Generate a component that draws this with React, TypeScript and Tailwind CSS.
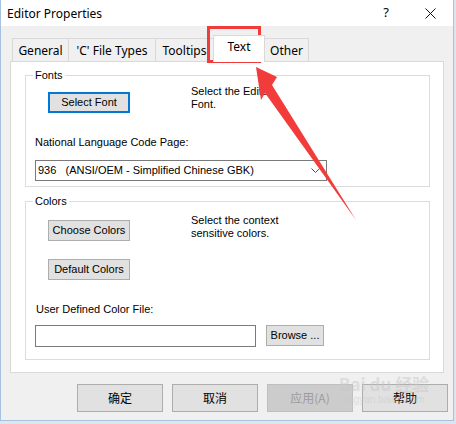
import React from "react";

const body = "font-['Liberation_Sans',Arial,sans-serif] text-[11px] leading-[13px] text-black";
const ui = "font-['Noto_Sans','Liberation_Sans',sans-serif]";
const cjk = "font-['Noto_Sans_CJK_SC','Noto_Sans',sans-serif]";

function Group({
  label,
  className,
  children,
}: {
  label: string;
  className?: string;
  children: React.ReactNode;
}) {
  return (
    <div className={`relative border border-[#dcdcdc] ${className ?? ""}`}>
      {/* legend over the border line */}
      <span className={`absolute -top-[7px] left-[7px] bg-white px-[2px] ${body}`}>{label}</span>
      {children}
    </div>
  );
}

function Tab({ label, w, active }: { label: string; w: string; active?: boolean }) {
  if (active) {
    return (
      <div
        className={`relative z-10 -ml-px flex h-[27px] items-start justify-center border border-b-0 border-[#d9d9d9] bg-white pt-[2px] text-[12px] ${ui} ${w}`}
      >
        {label}
      </div>
    );
  }
  return (
    <div
      className={`-ml-px flex h-[24px] items-start justify-center border border-[#d9d9d9] bg-[#f0f0f0] pt-[3px] text-[12px] first:ml-0 ${ui} ${w}`}
    >
      {label}
    </div>
  );
}

function DialogButton({ label, disabled }: { label: string; disabled?: boolean }) {
  return (
    <button
      className={`h-[28px] w-[86px] border text-[12px] ${cjk} ${
        disabled
          ? "border-[#bfbfbf] bg-[#cccccc] text-[#9c9c9c]"
          : "border-[#adadad] bg-[#e1e1e1] text-black"
      }`}
    >
      {label}
    </button>
  );
}

export default function App() {
  const smallBtn = `h-[21px] w-[82px] border border-[#adadad] bg-[#e1e1e1] ${body}`;

  return (
    <div className="relative h-[424px] w-[456px] overflow-hidden bg-[#dfe5ec]">
      {/* 窓本体 */}
      <div className="flex h-[421px] w-[454px] flex-col border-x border-b border-[#a7c2de] bg-[#f0f0f0]">
        {/* タイトルバー */}
        <div className={`flex h-[26px] shrink-0 items-center bg-white pl-[6px] text-[12px] text-black ${ui}`}>
          <span className="flex-1 pt-[1px]">Editor Properties</span>
          <span className="mr-[36px] text-[13px]">?</span>
          <svg width="11" height="11" viewBox="0 0 11 11" className="mr-[17px]">
            <path d="M0.5 0.5 L10.5 10.5 M10.5 0.5 L0.5 10.5" stroke="#111" strokeWidth="1" />
          </svg>
        </div>

        <div className="flex flex-1 flex-col pt-[9px]">
          {/* タブ */}
          <div className="-mb-px flex items-end pl-[11px]">
            <Tab label="General" w="w-[57px]" />
            <Tab label="'C' File Types" w="w-[88px]" />
            <Tab label="Tooltips" w="w-[59px]" />
            <Tab label="Text" w="w-[52px]" active />
            <Tab label="Other" w="w-[45px]" />
          </div>

          {/* タブパネル */}
          <div className="ml-[9px] flex h-[312px] w-[434px] flex-col border border-[#d9d9d9] bg-white px-[14px] pt-[13px]">
            <Group label="Fonts" className="h-[112px] w-[405px]">
              <div className="flex items-start pl-[22px] pt-[9px]">
                <button className={`h-[21px] w-[82px] mt-[7px] border-2 border-[#0078d7] bg-[#e1e1e1] ${body}`}>
                  Select Font
                </button>
                <p className={`ml-[61px] w-[96px] ${body}`}>Select the Editor Font.</p>
              </div>
              <div className={`ml-[9px] mt-[23px] ${body}`}>National Language Code Page:</div>
              <div className={`ml-[9px] mt-[11px] flex h-[21px] w-[292px] items-center border border-[#7a7a7a] bg-white pl-[2px] pr-[6px] ${body}`}>
                <span className="flex-1 whitespace-pre">936   (ANSI/OEM - Simplified Chinese GBK)</span>
                <svg width="9" height="6" viewBox="0 0 9 6">
                  <path d="M0.5 0.5 L4.5 4.5 L8.5 0.5" fill="none" stroke="#555" strokeWidth="1" />
                </svg>
              </div>
            </Group>

            <Group label="Colors" className="mt-[14px] h-[159px] w-[405px]">
              <div className="flex items-start pl-[22px] pt-[12px]">
                <button className={`mt-[6px] ${smallBtn}`}>Choose Colors</button>
                <p className={`ml-[61px] w-[110px] ${body}`}>Select the context sensitive colors.</p>
              </div>
              <button className={`ml-[22px] mt-[18px] ${smallBtn}`}>Default Colors</button>
              <div className={`ml-[10px] mt-[23px] ${body}`}>User Defined Color File:</div>
              <div className="ml-[9px] mt-[9px] flex items-start gap-[10px]">
                <div className="h-[22px] w-[221px] border border-[#7a7a7a] bg-white" />
                <button className={`h-[21px] w-[58px] border border-[#adadad] bg-[#e1e1e1] ${body}`}>
                  Browse ...
                </button>
              </div>
            </Group>
          </div>

          {/* 下部ボタン */}
          <div className="mt-[11px] flex justify-end gap-[9px] pr-[5px]">
            <DialogButton label="确定" />
            <DialogButton label="取消" />
            <DialogButton label="应用(A)" disabled />
            <DialogButton label="帮助" />
          </div>
        </div>
      </div>

      {/* 赤い注釈 */}
      <div className="pointer-events-none absolute left-[207px] top-[26px] h-[37px] w-[54px] border-[3px] border-[#f23c3c]" />
      <svg className="pointer-events-none absolute left-0 top-0" width="456" height="424" viewBox="0 0 456 424">
        <polygon points="256,67 277,77 272,85 356,220 265,93 261,100" fill="#f23c3c" />
      </svg>

      {/* 透かし */}
      <div className="pointer-events-none absolute left-[338px] top-[374px] flex w-[92px] flex-col items-center text-[rgba(200,200,200,0.5)]">
        <span className={`whitespace-nowrap text-[17px] font-bold leading-[20px] ${cjk}`}>Bai du 经验</span>
        <span className="whitespace-nowrap font-['Liberation_Sans',sans-serif] text-[10px] leading-[12px]">
          jingyan.baidu.com
        </span>
      </div>
    </div>
  );
}
